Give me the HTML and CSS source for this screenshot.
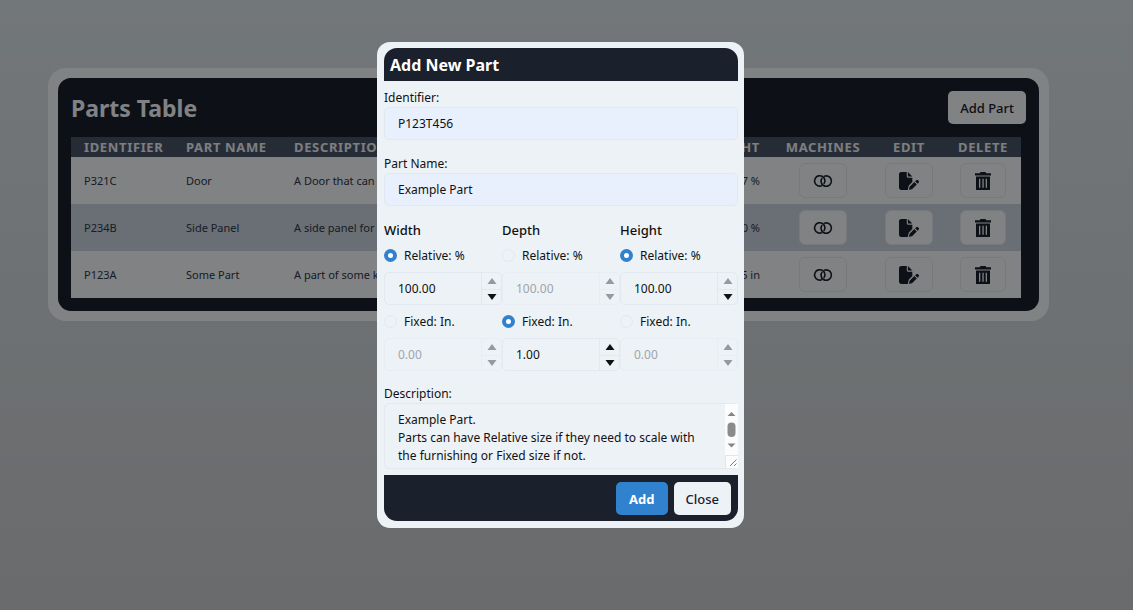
FILE: index.html
```html
<!DOCTYPE html>
<html lang="en">
<head>
<meta charset="utf-8">
<meta name="viewport" content="width=device-width, initial-scale=1">
<title>Parts Table</title>
<link rel="stylesheet" href="styles.css">
</head>
<body>
<svg class="sprite" aria-hidden="true">
  <symbol id="rings" viewBox="0 0 20 20"><g fill="none" stroke="currentColor" stroke-width="1.6"><path d="M9 14.600A5.200 5.200 0 1 1 11.900 9"/><path d="M11 5.400A5.200 5.200 0 1 1 8.100 11"/><path d="M11.900 9a5.200 5.200 0 0 1-1.100 4M8.100 11a5.200 5.200 0 0 1 1.100-4"/></g></symbol>
  <symbol id="edit" viewBox="0 0 576 512"><path fill="currentColor" d="M0 64C0 28.700 28.700 0 64 0H224V128c0 17.700 14.300 32 32 32H384V285.700l-86.800 86.800c-10.300 10.300-17.500 23.100-21 37.200l-18.700 74.900c-2.300 9.200-1.800 18.800 1.300 27.500L64 512c-35.300 0-64-28.700-64-64V64zm384 64H256V0L384 128zM549.800 235.700l14.400 14.400c15.600 15.600 15.600 40.900 0 56.600l-29.400 29.400-71-71 29.400-29.400c15.600-15.600 40.900-15.600 56.600 0zM311.900 417L441.100 287.800l71 71L382.900 487.900c-4.100 4.100-9.200 7-14.900 8.400l-60.100 15c-5.500 1.400-11.200-.2-15.200-4.200s-5.600-9.700-4.200-15.200l15-60.100c1.400-5.600 4.300-10.800 8.400-14.900z"/></symbol>
  <symbol id="trash" viewBox="0 0 16 18"><path fill="currentColor" fill-rule="evenodd" d="M5.500 0h5l.8 1.200H16V3.600H0V1.200h4.700zM1 4.600h14V18H1zM4 6.800v9h1.300v-9zm3.400 0v9h1.300v-9zm3.300 0v9H12v-9z"/></symbol>
  <symbol id="up" viewBox="0 0 10 6"><path fill="currentColor" d="M5 0 9.500 6H.5z"/></symbol>
  <symbol id="down" viewBox="0 0 10 6"><path fill="currentColor" d="M5 6 .5 0h9z"/></symbol>
</svg>

<main class="card">
  <section class="panel">
    <header class="panel-head">
      <h1>Parts Table</h1>
      <button class="btn btn-light" type="button">Add Part</button>
    </header>
    <table class="parts">
      <colgroup><col class="c-id"><col class="c-name"><col class="c-desc"><col class="c-dim"><col class="c-dim"><col class="c-dim"><col class="c-mach"><col class="c-edit"><col class="c-del"></colgroup>
      <thead>
        <tr><th>Identifier</th><th>Part Name</th><th>Description</th><th class="num">Width</th><th class="num">Depth</th><th class="num">Height</th><th class="act">Machines</th><th class="act">Edit</th><th class="act">Delete</th></tr>
      </thead>
      <tbody>
        <tr><td>P321C</td><td>Door</td><td>A Door that can open</td><td class="num"></td><td class="num"></td><td class="num">97 %</td>
          <td class="act"><button class="icon-btn" type="button" aria-label="Machines"><svg class="i-rings"><use href="#rings"/></svg></button></td>
          <td class="act"><button class="icon-btn" type="button" aria-label="Edit"><svg class="i-edit"><use href="#edit"/></svg></button></td>
          <td class="act"><button class="icon-btn slim" type="button" aria-label="Delete"><svg class="i-trash"><use href="#trash"/></svg></button></td></tr>
        <tr><td>P234B</td><td>Side Panel</td><td>A side panel for</td><td class="num"></td><td class="num"></td><td class="num">0 %</td>
          <td class="act"><button class="icon-btn" type="button" aria-label="Machines"><svg class="i-rings"><use href="#rings"/></svg></button></td>
          <td class="act"><button class="icon-btn" type="button" aria-label="Edit"><svg class="i-edit"><use href="#edit"/></svg></button></td>
          <td class="act"><button class="icon-btn slim" type="button" aria-label="Delete"><svg class="i-trash"><use href="#trash"/></svg></button></td></tr>
        <tr><td>P123A</td><td>Some Part</td><td>A part of some kind</td><td class="num"></td><td class="num"></td><td class="num">5 in</td>
          <td class="act"><button class="icon-btn" type="button" aria-label="Machines"><svg class="i-rings"><use href="#rings"/></svg></button></td>
          <td class="act"><button class="icon-btn" type="button" aria-label="Edit"><svg class="i-edit"><use href="#edit"/></svg></button></td>
          <td class="act"><button class="icon-btn slim" type="button" aria-label="Delete"><svg class="i-trash"><use href="#trash"/></svg></button></td></tr>
      </tbody>
    </table>
  </section>
</main>

<div class="overlay">
  <form class="modal" role="dialog" aria-modal="true" aria-labelledby="dlg-title">
    <header class="modal-head"><h2 id="dlg-title">Add New Part</h2></header>
    <div class="modal-body">
      <div class="field">
        <label for="ident">Identifier:</label>
        <input class="text" id="ident" type="text" value="P123T456">
      </div>
      <div class="field">
        <label for="pname">Part Name:</label>
        <input class="text" id="pname" type="text" value="Example Part">
      </div>
      <div class="dims">
        <fieldset class="dim">
          <legend>Width</legend>
          <label class="choice"><input type="radio" name="w" checked>Relative: %</label>
          <div class="number"><input type="number" step="0.01" value="100.00" aria-label="Width, relative"><span class="steps"><button type="button" disabled aria-label="Increase"><svg><use href="#up"/></svg></button><button type="button" aria-label="Decrease"><svg><use href="#down"/></svg></button></span></div>
          <label class="choice"><input type="radio" name="w">Fixed: In.</label>
          <div class="number off"><input type="number" step="0.01" value="0.00" disabled aria-label="Width, fixed"><span class="steps"><button type="button" disabled aria-label="Increase"><svg><use href="#up"/></svg></button><button type="button" disabled aria-label="Decrease"><svg><use href="#down"/></svg></button></span></div>
        </fieldset>
        <fieldset class="dim">
          <legend>Depth</legend>
          <label class="choice"><input type="radio" name="d">Relative: %</label>
          <div class="number off"><input type="number" step="0.01" value="100.00" disabled aria-label="Depth, relative"><span class="steps"><button type="button" disabled aria-label="Increase"><svg><use href="#up"/></svg></button><button type="button" disabled aria-label="Decrease"><svg><use href="#down"/></svg></button></span></div>
          <label class="choice"><input type="radio" name="d" checked>Fixed: In.</label>
          <div class="number"><input type="number" step="0.01" value="1.00" aria-label="Depth, fixed"><span class="steps"><button type="button" aria-label="Increase"><svg><use href="#up"/></svg></button><button type="button" aria-label="Decrease"><svg><use href="#down"/></svg></button></span></div>
        </fieldset>
        <fieldset class="dim">
          <legend>Height</legend>
          <label class="choice"><input type="radio" name="h" checked>Relative: %</label>
          <div class="number"><input type="number" step="0.01" value="100.00" aria-label="Height, relative"><span class="steps"><button type="button" disabled aria-label="Increase"><svg><use href="#up"/></svg></button><button type="button" aria-label="Decrease"><svg><use href="#down"/></svg></button></span></div>
          <label class="choice"><input type="radio" name="h">Fixed: In.</label>
          <div class="number off"><input type="number" step="0.01" value="0.00" disabled aria-label="Height, fixed"><span class="steps"><button type="button" disabled aria-label="Increase"><svg><use href="#up"/></svg></button><button type="button" disabled aria-label="Decrease"><svg><use href="#down"/></svg></button></span></div>
        </fieldset>
      </div>
      <div class="field last">
        <label for="descr">Description:</label>
        <div class="area">
          <textarea id="descr" rows="3">Example Part.
Parts can have Relative size if they need to scale with
the furnishing or Fixed size if not.</textarea>
          <svg class="scroll" viewBox="0 0 13 64" aria-hidden="true">
            <path fill="#fcfcfc" d="M0 0h13v64H0z"/>
            <path fill="#858585" d="m6.500 8 4 4h-8zM6.500 43.500l4-4h-8z"/>
            <rect x="2.500" y="18.500" width="8" height="14.500" rx="4" fill="#8b8b8b"/>
            <path fill="none" stroke="#e2e6ea" d="M.5 64V51.500H13"/>
            <path fill="none" stroke="#7d7d7d" d="m5 62 6.500-6.500M9 62l2.500-2.500"/>
          </svg>
        </div>
      </div>
    </div>
    <footer class="modal-foot">
      <button class="btn btn-primary" type="submit">Add</button>
      <button class="btn btn-light" type="button">Close</button>
    </footer>
  </form>
</div>
</body>
</html>
```

FILE: styles.css
```css
* { box-sizing: border-box; }
html { height: 100%; }
body {
  margin: 0;
  min-height: 100%;
  padding: 68px 84px 0 48px;
  background: linear-gradient(#dbe4e9, #cbcdd0);
  color: #1a202c;
  font: 12px/18px "Segoe UI", "Noto Sans", sans-serif;
}
button, input, textarea { font: inherit; color: inherit; }
h1, h2 { margin: 0; }
svg { display: block; }
.sprite { position: absolute; width: 0; height: 0; }

.card { padding: 10px; border-radius: 18px; background: #f7fafc; }
.panel { padding: 13px 18px 13px 13px; border-radius: 13px; background: #1a202c; }
.panel-head { display: flex; justify-content: space-between; align-items: center; margin: 0 -5px 13px 0; }
.panel-head h1 { color: #f7fafc; font-size: 23px; line-height: 32px; }

.btn { height: 33px; padding: 0 12px; border: 0; border-radius: 5px; font-size: 13px; font-weight: 500; }
.btn-light { background: #edf2f7; }
.card .btn-light { background: #f7fafc; }
.btn-primary { padding: 0 13px; background: #3182ce; color: #fff; font-weight: 700; }

.parts { width: 100%; table-layout: fixed; border-collapse: collapse; background: #f7fafc; }
.c-id { width: 102px; }
.c-name { width: 108px; }
.c-dim { width: 88px; }
.c-mach { width: 100px; }
.c-edit { width: 72px; }
.c-del { width: 76px; }
.parts th, .parts td { padding: 0 13px; text-align: left; white-space: nowrap; overflow: hidden; }
.parts th { height: 20px; background: #4a5568; color: #edf2f7; font-size: 13px; font-weight: 700; letter-spacing: 0.05em; text-transform: uppercase; }
.parts td { height: 47px; color: #2d3748; font-size: 11px; }
.parts tbody tr:nth-child(even) { background: #cbd5e0; }
.parts .num { text-align: right; }
.parts .act { padding: 0; text-align: center; }
.icon-btn { display: inline-grid; place-items: center; width: 48px; height: 35px; padding: 0; border: 1px solid #e2e8f0; border-radius: 6px; background: #f7fafc; color: #1a202c; vertical-align: middle; }
.icon-btn.slim { width: 46px; }
.i-rings { width: 20px; height: 20px; }
.i-edit { width: 20px; height: 18px; }
.i-trash { width: 16px; height: 18px; }

.overlay { position: fixed; inset: 0; display: flex; justify-content: center; align-items: flex-start; padding: 42px 12px 0 0; background: rgba(0, 0, 0, 0.48); }
.modal { width: 367px; padding: 6px 6px 7px 7px; border-radius: 13px; background: #edf2f7; }
.modal-head { padding: 7px 6px 5px; border-radius: 13px 13px 0 0; background: #1a202c; color: #fff; }
.modal-head h2 { font-size: 16px; line-height: 21px; }
.modal-body { padding: 8px 0 6px; color: #111; }
.field { margin-bottom: 15px; }
.field label { display: block; }
.text { display: block; width: 100%; height: 33px; padding: 0 13px; border: 1px solid #e2e8f0; border-radius: 5px; background: #e8f0fe; }
.dims { display: grid; grid-template-columns: repeat(3, 1fr); margin-bottom: 14px; }
.dim { min-width: 0; margin: 0; padding: 0; border: 0; }
.dim legend { padding: 0; font-size: 13px; font-weight: 500; line-height: 18px; }
.choice { display: flex; align-items: center; gap: 7px; height: 17px; margin: 8px 0; }
.choice input { appearance: none; width: 13px; height: 13px; margin: 0; border: 1px solid #e2e8f0; border-radius: 50%; }
.choice input:checked { border: 4px solid #3182ce; background: #fff; }
.number { display: flex; height: 33px; border: 1px solid #e2e8f0; border-radius: 5px; }
.number input { flex: 1; min-width: 0; padding: 0 0 0 13px; border: 0; background: none; appearance: textfield; }
.number input::-webkit-inner-spin-button { display: none; }
.steps { display: grid; grid-template-rows: 1fr 1fr; width: 20px; border-left: 1px solid #e2e8f0; }
.steps button { display: grid; place-items: center; padding: 0; border: 0; background: none; }
.steps button + button { border-top: 1px solid #e2e8f0; }
.steps svg { width: 10px; height: 6px; }
.steps button:disabled { color: #9599a1; }
.off { border-color: #e8edf3; color: #a0a4aa; }
.off .steps, .off .steps button { border-color: #e8edf3; }
.field.last { margin: 0; }
.area { position: relative; }
.area textarea { display: block; width: 100%; height: 66px; padding: 7px 24px 0 13px; border: 1px solid #e2e8f0; border-radius: 5px; background: none; resize: none; overflow: hidden; line-height: 18px; }
.scroll { position: absolute; top: 1px; right: 0; width: 13px; height: 64px; }
.modal-foot { display: flex; justify-content: flex-end; gap: 6px; padding: 7px 7px 6px; border-radius: 0 0 13px 13px; background: #1a202c; }
```
